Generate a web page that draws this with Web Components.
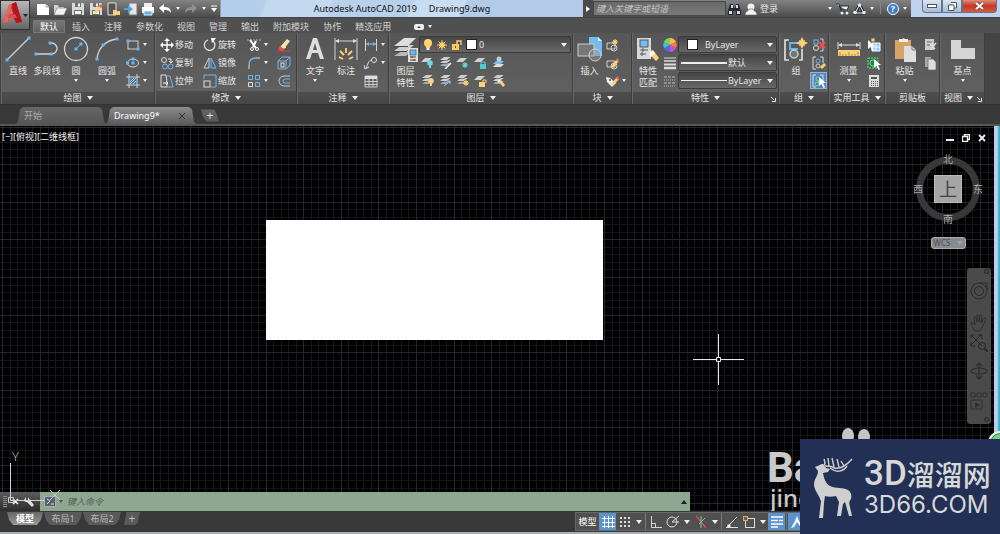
<!DOCTYPE html>
<html lang="zh-CN">
<head>
<meta charset="utf-8">
<title>Autodesk AutoCAD 2019</title>
<style>
html,body{margin:0;height:100%;background:#383838}
body{font:9px/12px "Noto Sans","Noto Sans CJK SC",sans-serif;color:#e6e6e6;overflow:hidden}
</style>
</head>
<body>
<cad-app></cad-app>
<script>
const B='#74b4e6', G='#d2d2d2', Y='#ffd07a';
const S=(c,w=1)=>`fill="none" stroke="${c}" stroke-width="${w}"`;
const dot=(x,y,c='#62b8f5')=>`<rect x="${x-1.5}" y="${y-1.5}" width="3" height="3" fill="${c}"/>`;
const sheets=(c='#cfcfcf',m='#a9a9a9')=>`<path d="M1 10l4-3h7l-4 3z" fill="${m}"/><path d="M1 7l4-3h7l-4 3z" fill="${c}"/><path d="M1 4l4-3h7l-4 3z" fill="${c}"/><path d="M1 7.5h7l4-3M1 4.5h7l4-3" ${S('#454545',.6)}/>`;
const one=`<path d="M0 6l4-4h7l-4 4z" fill="#d0d0d0"/>`;
const bulb=(x,y,c)=>`<circle cx="${x}" cy="${y}" r="2.8" fill="${c}"/><path d="M${x-1} ${y+2}h2v3h-2z" fill="${c}"/>`;
const star=(x,y,r,c=Y)=>`<path d="M${x} ${y-r}v${2*r}M${x-r} ${y}h${2*r}M${x-r*.7} ${y-r*.7}l${r*1.4} ${r*1.4}M${x+r*.7} ${y-r*.7}l${-r*1.4} ${r*1.4}" ${S(c,1)}/><circle cx="${x}" cy="${y}" r="${r*.55}" fill="${c}"/>`;
const pencil=`<path d="M6 12l1-3 5-6 2 2-5 6z" fill="${Y}"/><path d="M11 4l1.500-2 2.500 2-2 2z" fill="#ef5a4c"/>`;
const cursor=(x,y,c='#fff')=>`<path d="M${x} ${y}l7 6-3 .300 2 4-1.500.700-2-4-2.500 2z" fill="${c}"/>`;
const floppy=`<path d="M2 1h11l1 1v11H2z" fill="#d9d9d9"/><path d="M5 1h6v4H5zM4 8h8v5H4z" fill="#707070"/><path d="M5 9h6v3H5zM8 1.500h2v3H8z" fill="#f4f4f4"/>`;
const ICONS={
 newf:[14,14,`<path d="M1 2h9l3 3v8H1z" fill="#fff"/><path d="M10 2v3h3" ${S('#777',.7)}/>`],
 open:[14,14,`<path d="M1 12V3h4l1 2h5v2" fill="#d0d0d0"/><path d="M1 13l3-7h10l-3 7z" fill="#f2f2f2" stroke="#777" stroke-width=".6"/>`],
 save:[15,14,floppy], saveas:[15,14,floppy+pencil],
 openweb:[14,14,`<path d="M2 1h8v12H2z" fill="#555" stroke="#e0e0e0"/><path d="M7 8h3l1 1h3v4H7z" fill="${Y}"/>`],
 saveweb:[14,14,`<path d="M5 1h8v12H5z" fill="#e5e5e5" stroke="#777"/><path d="M0 6h4V3l5 4-5 4V8H0z" fill="#4ba3e0"/>`],
 print:[14,14,`<path d="M3 1h8v4H3z" fill="#eee"/><path d="M1 5h12v6H1z" fill="#fff"/><path d="M3 9h8v4H3z" fill="#56b4f5" stroke="#eee"/>`],
 undo:[14,12,`<path d="M1 5l5-4v3c4 0 7 1 7 6-2-3-4-3-7-3v3z" fill="#fff"/>`],
 redo:[14,12,`<path d="M13 5L8 1v3c-4 0-7 1-7 6 2-3 4-3 7-3v3z" fill="#8f8f8f"/>`],
 more:[8,8,`<path d="M1 1h6" ${S('#fff',1)}/><path d="M1 3h6L4 7z" fill="#fff"/>`],
 down:[6,4,`<path d="M0 0h6L3 4z" fill="#f0f0f0"/>`],
 downs:[4,3,`<path d="M0 0h4L2 3z" fill="#f0f0f0"/>`],
 right:[4,6,`<path d="M0 0v6l4-3z" fill="#fff"/>`],
 up:[6,4,`<path d="M0 4h6L3 0z" fill="#202020"/>`],
 launch:[5,5,`<path d="M0 0l3 3M4.500 1v3.500H1" ${S('#e6e6e6')}/>`],
 toggle:[10,6,`<rect width="10" height="6" rx="2" fill="#eee"/><path d="M3 4h4L5 2z" fill="#444"/>`],
 bino:[13,12,`<path d="M2 1h3l1 4h1l1-4h3l2 7v4H8V8H5v4H0V8z" fill="#242a35"/><path d="M3 2h2v3H3zM8 2h2v3H8zM1 8h3v3H1zM9 8h3v3H9z" fill="#d9dde3"/>`],
 user:[12,12,`<circle cx="6" cy="4" r="3.500" fill="#f4f4f4"/><path d="M0 12c0-4 4-4 4-6h4c0 2 4 2 4 6z" fill="#f4f4f4" stroke="#444" stroke-width=".5"/>`],
 cart:[13,12,`<path d="M0 1h3l2 7h7M4 3h9l-2 4H5z" fill="#eef0f4" stroke="#252b38" stroke-width="1"/><circle cx="6" cy="10" r="1.500" fill="#eee"/><circle cx="11" cy="10" r="1.500" fill="#eee"/>`],
 a360:[13,12,`<path d="M6.500 2l4.500 8H2z" fill="none" stroke="#222c3e" stroke-width="3"/><path d="M6.500 2l4.500 8H2z" fill="none" stroke="#f5f5f5" stroke-width="1"/><circle cx="6.500" cy="2" r="1.800" fill="#eee"/><circle cx="2" cy="9.500" r="1.800" fill="#eee"/><circle cx="11" cy="9.500" r="1.800" fill="#eee"/>`],
 line:[26,26,`<path d="M2 24L24 2" ${S(G,1.3)}/>${dot(2,24)}${dot(24,2)}`],
 pline:[26,26,`<path d="M2 18h15a5.500 5.500 0 0 0 1-11h-2" ${S(G,1.3)}/>${dot(2,18)}${dot(17,18)}${dot(16,7)}`],
 circle:[26,26,`<circle cx="13" cy="13" r="11.500" ${S(G,1.3)}/><path d="M13 13l5-5" ${S('#62b8f5')}/>${dot(13,13)}${dot(18,8)}`],
 arc:[26,26,`<path d="M3 23C4 12 12 4 23 3" ${S(G,1.3)}/>${dot(3,23)}${dot(9,9)}${dot(23,3)}`],
 rect:[14,12,`<rect x="2" y="2" width="10" height="8" ${S(G)}/>${dot(2,2)}${dot(12,10)}`],
 ellipse:[14,12,`<ellipse cx="7" cy="6" rx="5.500" ry="4" ${S(G)}/>${dot(7,6)}${dot(1.5,6)}${dot(7,2)}`],
 hatch:[14,14,`<rect x="4" y="4" width="6" height="6" fill="#3f80b8"/><path d="M3 0v14M11 0v14M0 3h14M0 11h14" ${S(G)}/><path d="M4 8l4-4M4 10l6-6M7 10l3-3" ${S('#86c7f5')}/>`],
 move:[14,14,`<path d="M7 2v10M2 7h10" ${S('#fff',1.4)}/><path d="M7 0l3 3H4zM7 14l3-3H4zM0 7l3-3v6zM14 7l-3-3v6z" fill="#fff"/>`],
 rotate:[14,14,`<path d="M5 2a5.300 5.300 0 1 0 5 1" ${S('#e0e0e0',1.3)}/><path d="M8 0h5L9 5z" fill="#fff"/>`],
 copy:[14,14,`<circle cx="4" cy="4" r="2.500" ${S('#ddd')}/><path d="M8 3h3v4M9 5l2 2 2-2" ${S('#eee')}/><circle cx="5" cy="10.500" r="2.500" ${S(B)}/><circle cx="10.500" cy="10.500" r="2.500" ${S(B)}/>`],
 mirror:[14,14,`<path d="M6 2v10H1z" ${S('#cfcfcf')}/><path d="M8 2v10h5z" fill="#366b99" stroke="${B}"/>`],
 stretch:[14,14,`<path d="M1 1h5l1 7v5H1z" ${S('#ddd')}/><path d="M7 2h3l3 11H6" ${S(B)}/><path d="M3 9h5M6 7l2 2-2 2" ${S('#fff')}/>`],
 scale:[14,14,`<path d="M1 5V1h12v12H8" ${S(B)}/><rect x="1" y="7" width="6" height="6" ${S('#ddd')}/>`],
 trim:[14,14,`<path d="M0 2h14" stroke="#a8a8a8" stroke-dasharray="2 1"/><path d="M3 2l6 8M9 3L6 9" ${S('#fff',2)}/><circle cx="5" cy="11" r="1.500" ${S('#fff')}/><circle cx="10" cy="11" r="1.500" ${S('#fff')}/>`],
 fillet:[14,14,`<path d="M2 13V9" ${S('#ddd')}/><path d="M2 9c0-5 2-7 7-7" ${S(B,1.3)}/><path d="M9 2h4" ${S('#ddd')}/>`],
 array:[14,14,`<path d="M1.500 1.500h4v4h-4zM8.500 8.500h4v4h-4zM8.500 1.500h4v4h-4z" ${S(B)}/><path d="M1.500 8.500h4v4h-4z" ${S('#ddd')}/>`],
 erase:[14,14,`<path d="M1 13h12" ${S('#b65045')}/><path d="M3 9l7-8 3 2-6 8z" fill="#ffdf9a"/><path d="M3 8l5 4-4 1-3-2z" fill="#f04e45"/><path d="M5 7l4 3" ${S('#fff')}/>`],
 explode:[14,14,`<path d="M1 5h8v8H1zM1 5l4-4h8l-4 4M9 13l4-4V1" ${S(B)}/><rect x="4" y="7" width="3" height="4" ${S('#ddd')}/>`],
 offset:[14,14,`<path d="M13 2H7a5 5 0 0 0 0 10h6" ${S('#ccc')}/><path d="M13 5H8a2 2 0 0 0 0 4h5" ${S(B)}/>`],
 text:[26,26,`<path d="M4 23L11 2h4l7 21h-4l-2-6H10l-2 6zM11 14h4L13 7z" fill="#dedede"/>`],
 dim:[26,26,`<path d="M2 2v22M24 2v22M3 5h20" ${S('#d4d4d4')}/><path d="M2 5l4-2v4zM24 5l-4-2v4z" fill="#ddd"/><path d="M6 21l4 2M7 15l4 4M13 12v5M19 15l-4 4M20 21l-4 2" ${S(Y,1.8)}/>`],
 linear:[14,14,`<path d="M1.500 1v12M12.500 1v12" ${S('#d5d5d5')}/><path d="M2 6h10" ${S(B,1.3)}/><path d="M2 6l3-2v4zM12 6L9 4v4z" fill="${B}"/>`],
 leader:[14,14,`<circle cx="10" cy="4" r="2.500" ${S('#ddd')}/><path d="M8 4C4 4 4 9 2 12M0 9l1 4 4-2" ${S('#ddd')}/>`],
 table:[14,14,`<path d="M1 2h12v11H1z" ${S('#ccc')}/><path d="M1 2h12v3H1z" fill="#ddd"/><path d="M1 7.500h12M1 10.500h12M5 5v8M9 5v8" ${S('#ccc')}/>`],
 layers:[26,26,`<path d="M1 20l8-5h10l-6 5z" fill="#b9b9b9"/><path d="M1 15l8-6h12l-7 6z" fill="#cfcfcf"/><path d="M1 10L11 2h12l-8 8z" fill="#dedede"/><path d="M1 10.500h14M1 15.500h13" ${S('#454545')}/><rect x="15" y="12" width="10" height="14" fill="#ddd"/><rect x="17" y="14" width="6" height="5" fill="#63bdf8" stroke="#555" stroke-width=".7"/><path d="M17 21h6M17 24h6M19 20v2M21 23v2" ${S('#444')}/>`],
 bulb:[10,12,`<circle cx="5" cy="4" r="4" fill="#ffd46f"/><path d="M3 6h4v3H3z" fill="#ffd46f"/><path d="M3.500 9h3v2h-3z" fill="#eee"/>`],
 sun:[12,12,star(6,6,5,'#ffcf61')],
 unlock:[12,12,`<path d="M1 5h7v6H1z" fill="#ffc95e"/><path d="M6 5V2h4v4" ${S('#ffc95e',1.5)}/><path d="M4 7h1v2H4z" fill="#555"/>`],
 l1:[13,13,one+bulb(9,7,'#65dce0')], l2:[13,13,sheets()+`<path d="M6 13l6-6" ${S('#fff',1.5)}/><path d="M2 9l5 1" ${S(B)}/>`],
 l3:[13,13,one+star(9,9,3,'#61dbe2')], l4:[13,13,one+`<path d="M6 8h6v5H6z" fill="#4fcbd8"/><path d="M7 8V6h4v2" ${S('#4fcbd8')}/>`],
 l5:[13,13,`<path d="M1 11l3-3h8l-3 3z" fill="#ddd"/><path d="M1 8l3-3h8l-3 3z" fill="#79bdf5"/><circle cx="7" cy="3" r="2.500" fill="#ccc"/>`],
 l6:[13,13,sheets()+bulb(10,7,Y)], l7:[13,13,sheets()+`<path d="M5 12l6-5M8 7h3v3" ${S('#8bcdf8')}/>`],
 l8:[13,13,sheets()+star(10,9,3)], l9:[13,13,one+`<path d="M5 8h6v5H5z" fill="${Y}"/><path d="M9 8V6h3v3" ${S(Y)}/>`],
 l10:[13,13,sheets()+`<path d="M7 8l2-2 4 5-2 2z" fill="${Y}"/><path d="M6 8l2-2" ${S('#fff',2)}/>`],
 insert:[26,26,`<path d="M12 1h9l4 4v15H12z" fill="#72bcf0"/><path d="M21 1v4h4" fill="#d5edff"/><rect x="1" y="8" width="16" height="12" fill="#777" stroke="#d0d0d0"/><circle cx="18" cy="19" r="6" fill="#9997" stroke="#d0d0d0"/>`],
 b1:[14,14,`<path d="M2 5h8v6H2z" ${S(G)}/><circle cx="9" cy="10" r="3" ${S(G)}/>${star(10,4,3)}`],
 b2:[14,14,`<path d="M2 5h8v6H2z" ${S(G)}/><circle cx="9" cy="10" r="3" ${S(G)}/>${pencil}`],
 b3:[14,14,`<path d="M1 3l4 1 6 5-4 4-5-5z" fill="#eee"/><circle cx="5" cy="6" r="1" fill="#555"/>${pencil}`],
 match:[26,26,`<rect x="2" y="2" width="14" height="21" fill="#d8d8d8"/><rect x="5" y="4" width="8" height="7" fill="#72bdf2" stroke="#555"/><path d="M5 14h8M5 18h6M8 12v4M7 16v4" ${S('#555')}/><path d="M14 18l4-4 6 8-3 3z" fill="${Y}"/><path d="M14 18l3-4 3 3-4 4z" fill="#fff"/>`],
 wheel:[14,14,`<path d="M7 7V0a7 7 0 0 1 6 4z" fill="#fdb74b"/><path d="M7 7l6-3a7 7 0 0 1 0 6z" fill="#fb7a40"/><path d="M7 7l6 3a7 7 0 0 1-6 4z" fill="#c052d0"/><path d="M7 7v7a7 7 0 0 1-6-4z" fill="#5667e0"/><path d="M7 7l-6 3a7 7 0 0 1 0-6z" fill="#43bde2"/><path d="M7 7L1 4a7 7 0 0 1 6-4z" fill="#79d75a"/>`],
 weights:[14,14,`<path d="M1 2h12" ${S('#ddd')}/><path d="M1 5h12" ${S('#ddd',1.5)}/><path d="M1 8.500h12" ${S('#ddd',2)}/><path d="M1 12h12" ${S('#ddd',2.5)}/>`],
 types:[14,14,`<path d="M1 3h12M1 9h12" ${S('#bbb')} stroke-dasharray="3 1"/><path d="M1 6h12M1 12h12" ${S('#bbb')} stroke-dasharray="1 1"/>`],
 group:[26,26,`<path d="M6 4H2v20h4M16 24h3V13" ${S('#ddd',1.7)}/><path d="M15 7H7v6h8" ${S('#62b8f5',1.8)}/><circle cx="11" cy="18" r="4" fill="#777" stroke="#ccc" stroke-width="1.500"/><path d="M19 1l2 4 4 2-4 2-2 4-2-4-4-2 4-2z" fill="${Y}"/>${star(19,7,4)}`],
 g1:[14,14,`<path d="M8 1h3v12H8" ${S('#ccc')}/><rect x="2" y="2" width="4" height="4" ${S(B)}/><circle cx="4" cy="10" r="2.500" ${S('#ddd')}/><path d="M7 4l6 6M13 4l-6 6" ${S('#f34c49',2)}/>`],
 g2:[14,14,`<path d="M4 1H1v12h3M8 1h3v6" ${S('#ddd')}/><circle cx="6" cy="5" r="2" ${S(B)}/><circle cx="6" cy="10" r="2" ${S('#ccc')}/><path d="M8 11l4-4 2 2-4 4z" fill="${Y}"/>`],
 g3:[14,14,`<path d="M4 1H1v12h3M8 1h3v6" ${S('#ddd')}/><circle cx="6" cy="5" r="2" ${S('#65dd91')}/><circle cx="5" cy="10" r="2" ${S('#65dd91')}/>${cursor(7,3)}`],
 measure:[26,26,`<path d="M2 6v7M24 6v7M3 9h20" ${S('#ddd')}/><path d="M2 9l4-2v4zM24 9l-4-2v4z" fill="#ddd"/><rect x="2" y="14" width="22" height="6" fill="${Y}"/><path d="M4 16v4M7 18v2M10 18v2M13 16v4M16 18v2M19 18v2M22 16v4" ${S('#886a38',.7)}/>`],
 u1:[14,14,`<path d="M5 5h8v8H5z" fill="#8ccaf5" stroke="#fff"/><path d="M9 5v8M5 9h8" ${S('#fff')}/>${cursor(1,2)}${star(6,2,2)}`],
 u2:[14,14,`<rect x="1" y="2" width="10" height="10" fill="#267c46" stroke="#74d68b" stroke-dasharray="2 1"/><circle cx="6" cy="7" r="3" ${S('#70e08f')}/>${cursor(7,3)}`],
 calc:[14,14,`<path d="M2 1h10v12H2z" fill="#ddd"/><path d="M4 3h6v2H4z" fill="#555"/><path d="M4 7.500h7M4 9.500h7M4 11.500h7" stroke="#555" stroke-dasharray="1 1"/>`],
 paste:[26,26,`<rect x="3" y="4" width="16" height="19" fill="#d7a468"/><path d="M7 6V3h3a2 2 0 0 1 3 0h3v3z" fill="#eee"/><path d="M12 10h8l4 4v12H12z" fill="#dedede"/><path d="M20 10v4h4" ${S('#777')}/>`],
 cut:[14,14,`<path d="M2 1h9v11H2z" fill="#ccc"/><path d="M4 4h5M4 7h3" ${S('#666')}/><path d="M7 5l5 6M13 5l-5 6" ${S('#ddd',1.5)}/>`],
 copyd:[14,14,`<path d="M2 1h6v10H2z" fill="#aaa"/><path d="M5 3h5l3 3v8H5z" fill="#ddd" stroke="#666" stroke-width=".7"/>`],
 base:[26,26,`<path d="M1 4h10v8h14v11H1z" fill="#d5d5d5"/>`],
 grid:[14,14,`<path d="M3.500 1v12M7.500 1v12M11.500 1v12M1 3.500h13M1 7.500h13M1 11.500h13" ${S('#fff')}/>`],
 dots:[14,14,`<path d="M2 3h10M2 7h10M2 11h10" stroke="#ddd" stroke-width="2" stroke-dasharray="2 2"/>`],
 ortho:[14,14,`<path d="M2.500 1v11.500H13M3 8.500h3.500v4" ${S('#d5d5d5')}/>`],
 polar:[14,14,`<circle cx="6" cy="7" r="5" ${S('#ddd')}/><path d="M6 7l7-6M6 7h7" ${S('#ddd')}/>`],
 iso:[14,14,`<path d="M2 1l10 12" ${S('#dd4e52',1.3)}/><path d="M7 1v12" ${S('#69b572',1.3)}/><path d="M5 9l6-6" ${S('#aaa')}/>`],
 track:[14,14,`<path d="M2 12L12 2M1 12.500h12" ${S('#ddd')}/>${dot(4,11,'#eee')}`],
 snap:[14,14,`<rect x="3.500" y="3.500" width="9" height="9" ${S('#ddd')}/><rect x="1.500" y="1.500" width="4" height="4" fill="#606060" stroke="#e7a75b"/>`],
 lwt:[14,14,`<path d="M1 2h12M1 5.500h7M9 5.500h4M1 9h12M1 12h7" ${S('#fff',1.5)}/>`],
 ann:[14,14,`<path d="M7 1l2 5 4 6-3-1-3-4-3 5-3 1 4-7z" fill="#fff"/>`],
 wrench:[10,10,`<path d="M0 3l2-3v3l2 0V0l2 3 4 5-2 2-5-5-2 0z" fill="#ddd"/>`],
 prompt:[12,11,`<rect x="0" y="0" width="12" height="11" rx="1" fill="#a7aeb0"/><rect x="1" y="1" width="10" height="9" fill="#58636b"/><path d="M3 3l3 2-3 3M7 8h3" ${S('#ddd')}/>`],
 wheel2:[18,18,`<circle cx="9" cy="9" r="8" ${S('#252525')}/><circle cx="9" cy="9" r="4.500" ${S('#252525')}/><path d="M10 1h7v7" ${S('#252525')}/>`],
 hand:[18,18,`<path d="M5 17L1 10c-1-2 1-2 2-1l2 2L4 4c0-2 2-2 2 0l1 4V2c0-2 2-2 2 0v6l1-6c0-2 2-1 2 0l-1 7 3-5c1-1 2 0 2 1l-4 9-2 3z" ${S('#292929')}/>`],
 zoom:[18,18,`<path d="M2 2l10 10M11 1L1 11M1 4V1h3M8 1h4v4M1 8v4h4" ${S('#1f1f1f')}/><circle cx="12" cy="12" r="3.500" ${S('#1f1f1f')}/><path d="M15 15l3 3" ${S('#1f1f1f',2)}/>`],
 orbit:[18,18,`<path d="M9 1v16M6 4l3-3 3 3M6 14l3 3 3-3" ${S('#292929',1.3)}/><ellipse cx="9" cy="9" rx="8" ry="3" ${S('#292929',1.2)}/>`],
 motion:[18,18,`<path d="M1 1h4v4H1zM7 1h4v4H7zM13 1h4v4h-4zM1 8h11v9H1z" ${S('#292929')}/><path d="M5 10l5 3-5 3z" fill="#292929"/>`]
};
const svg=n=>{const[w,h,b]=ICONS[n];return `<svg width="${w}" height="${h}" viewBox="0 0 ${w} ${h}" aria-hidden="true">${b}</svg>`};
const reset=`*{box-sizing:border-box}svg{display:block;flex:none}button,input,select{font:inherit;color:inherit;margin:0;padding:0;border:0;background:none;outline:0}button{display:flex;align-items:center;justify-content:center;white-space:nowrap}`;
const define=(tag,css,html,after)=>customElements.define(tag,class extends HTMLElement{
 connectedCallback(){if(this.shadowRoot)return;const r=this.attachShadow({mode:'open'});
 r.innerHTML=`<style>${reset}${css}</style>${typeof html==='function'?html(this):html}`;if(after)after(this,r)}
});

define('tool-big',`:host{display:block}button{flex-direction:column;justify-content:flex-start;width:100%;height:56px;line-height:12px;text-align:center}.t{margin-top:3px;display:block}.d{margin-top:2px}`,
 e=>`<button>${svg(e.getAttribute('icon'))}<span class="t"><slot></slot></span>${e.hasAttribute('menu')?`<span class="d">${svg('downs')}</span>`:''}</button>`);

define('tool-small',`:host{display:block}button{height:17px;justify-content:flex-start}.i{width:17px;height:17px;display:grid;place-items:center}:host([active]) .i{background:#5486bd;box-shadow:0 0 0 1px #8fb3dc inset}.d{width:8px;display:grid;place-items:center}`,
 e=>`<button aria-label="${e.textContent||e.getAttribute('icon')}"><span class="i">${svg(e.getAttribute('icon'))}</span><slot></slot>${e.hasAttribute('menu')?`<span class="d">${svg('downs')}</span>`:''}</button>`);

define('tool-grid',`:host{display:grid;grid-auto-flow:column;grid-template-rows:repeat(3,17px);gap:1px 0}`,`<slot></slot>`);

define('ribbon-panel',`:host{display:flex;flex-direction:column;border-right:1px solid #3e3e3e;border-left:1px solid #686868;flex:none}
 .body{flex:1;display:flex;padding:3px 2px 0;background:linear-gradient(#565656,#606060)}
 footer{height:13px;display:flex;align-items:center;justify-content:center;gap:5px;background:linear-gradient(#4d4d4d,#464646);position:relative}
 .l{position:absolute;right:2px;top:5px}:host([launcher][w="45"]) footer{padding-right:8px}`,
 e=>`<div class="body"><slot></slot></div><footer><span>${e.getAttribute('label')}</span>${e.hasAttribute('plain')?'':svg('down')}${e.hasAttribute('launcher')?`<span class="l">${svg('launch')}</span>`:''}</footer>`,
 e=>e.style.width=e.getAttribute('w')+'px');

define('prop-select',`:host{display:flex;position:relative;height:17px;border:1px solid #3b3b3b;border-radius:2px;background:linear-gradient(#454545,#686868);align-items:center}
 select{appearance:none;width:100%;height:100%;padding-left:var(--inset,26px)}.a{position:absolute;right:3px;pointer-events:none}.p{position:absolute;left:2px;display:flex;align-items:center;gap:2px;pointer-events:none}`,
 e=>`<select aria-label="${e.getAttribute('name')}"><option>${e.getAttribute('value')}</option></select><span class="p"><slot></slot></span><span class="a">${svg('down')}</span>`);

define('title-bar',`:host{display:flex;height:17px;background:linear-gradient(#828282,#4c4c4c);padding-left:30px}
 .q{display:flex;align-items:center;width:191px;padding:0 2px 0 4px;border-right:1px solid #9a9a9a}.q .f{display:grid;grid-template-columns:repeat(7,1fr);width:123px;place-items:center}.q .r{flex:1;display:flex;justify-content:space-between;align-items:center;padding-left:1px}
 .t{flex:1;background:linear-gradient(115deg,#b4cdea 12%,#c4d8ef 13% 30%,#b9d0ea 31% 52%,#c9ddf2 53% 66%,#b3cbe8 67%);color:#111;display:flex;align-items:center;justify-content:center;gap:12px;white-space:nowrap}
 .e{width:10px;justify-content:center;background:#4a4a4a}input{width:133px;height:15px;margin-top:1px;background:linear-gradient(#696969,#7a7a7a);padding:0 2px;border:1px solid #484848;font-style:italic}input::placeholder{color:#c4c4c4;opacity:1}
 .u{width:185px;display:flex;align-items:center;padding:0 4px 0 2px;gap:4px}.u .s{flex:1}.u .v{width:1px;height:11px;background:#8a8a8a;margin:0 2px}.u .n{padding-left:3px}.h{width:12px;height:12px;border-radius:50%;background:#3e7cc8;border:1px solid #fff;color:#fff;font-weight:bold;line-height:10px}
 .w{width:89px;background:#bfd4ec;display:flex;padding-left:11px}.w button{height:13px;border:1px solid #64748a;border-top:0;background:linear-gradient(#dbe5f0,#a9bdd4);width:20px}.w .m{border-radius:0 0 0 4px}.w .c{width:35px;background:linear-gradient(#e08c7c,#c43625 50%,#d65a48);border-radius:0 0 4px 0}`,
 `<div class="q"><div class="f">${['newf','open','save','saveas','openweb','saveweb','print'].map(i=>`<button aria-label="${i}">${svg(i)}</button>`).join('')}</div><div class="r">${['undo','downs','redo','downs','more'].map(i=>`<button aria-label="${i}">${svg(i)}</button>`).join('')}</div></div>
 <div class="t"><span>Autodesk AutoCAD 2019</span><span>Drawing9.dwg</span></div>
 <button class="e" aria-label="expand">${svg('right')}</button><input aria-label="search" placeholder="键入关键字或短语">
 <div class="u"><button aria-label="find">${svg('bino')}</button><button>${svg('user')}<span class="n">登录</span></button><span class="s"></span>${svg('downs')}<button aria-label="cart">${svg('cart')}</button><button aria-label="apps">${svg('a360')}</button>${svg('downs')}<span class="v"></span><button class="h">?</button>${svg('downs')}</div>
 <div class="w"><button class="m" aria-label="minimize"><svg width="10" height="5"><rect x=".5" y=".5" width="9" height="3" fill="#fff" stroke="#4c5663"/></svg></button><button aria-label="restore"><svg width="9" height="9"><path d="M3 .5h5.500v5.500H6M.5 3h5.500v5.500H.5z" fill="#fff" stroke="#4c5663"/></svg></button><button class="c" aria-label="close"><svg width="9" height="8"><path d="M1 1l7 6M8 1L1 7" stroke="#6d3c38" stroke-width="3"/><path d="M1 1l7 6M8 1L1 7" stroke="#fff" stroke-width="2"/></svg></button></div>`);

define('ribbon-tabs',`:host{display:flex;height:16px;background:#505050;padding:2px 0 0 33px;align-items:stretch;border-top:1px solid #444}
 button{padding:0 7px;color:#d0d0d0}button.on{background:linear-gradient(#7a7a7a,#606060);color:#fff;box-shadow:0 0 0 1px #777 inset;border-radius:2px 2px 0 0}.g{display:flex;align-items:center;gap:4px;padding-left:16px}`,
 `${['默认','插入','注释','参数化','视图','管理','输出','附加模块','协作','精选应用'].map((t,i)=>`<button class="${i?'':'on'}">${t}</button>`).join('')}<div class="g">${svg('toggle')}${svg('downs')}</div>`);

const small=(i,t='',a='')=>`<tool-small icon="${i}" ${a}>${t}</tool-small>`;
define('ribbon-bar',`:host{display:flex;height:72px;background:#444;padding-left:1px;border-bottom:1px solid #333}
 ribbon-panel>*{flex:none}.mod{grid-template-columns:43px 44px 30px 17px}.row{display:grid;grid-template-columns:repeat(5,1fr);width:88px;place-items:center;height:17px}.lay{width:152px;display:grid;grid-template-rows:repeat(3,17px);gap:1px}.row tool-small{height:17px}.props{width:99px;display:grid;grid-template-rows:repeat(3,17px);gap:1px}
 .sw{width:11px;height:11px;background:#fff;border:1px solid #222}.in{display:flex;gap:3px;align-items:center;padding-left:1px}.in.c{padding-left:6px}.ln{width:46px;height:2px;background:#eee}.thin{height:1px}`,
 `<ribbon-panel label="绘图" w="154"><tool-big icon="line" style="width:28px">直线</tool-big><tool-big icon="pline" style="width:30px">多段线</tool-big><tool-big icon="circle" menu style="width:28px">圆</tool-big><tool-big icon="arc" menu style="width:34px">圆弧</tool-big><tool-grid>${small('rect','','menu')+small('ellipse','','menu')+small('hatch','','menu')}</tool-grid></ribbon-panel>
 <ribbon-panel label="修改" w="142"><tool-grid class="mod">${small('move','移动')+small('copy','复制')+small('stretch','拉伸')+small('rotate','旋转')+small('mirror','镜像')+small('scale','缩放')+small('trim','','menu')+small('fillet','','menu')+small('array','','menu')+small('erase')+small('explode')+small('offset')}</tool-grid></ribbon-panel>
 <ribbon-panel label="注释" w="92"><tool-big icon="text" menu style="width:30px">文字</tool-big><tool-big icon="dim" style="width:32px">标注</tool-big><tool-grid>${small('linear','','menu')+small('leader','','menu')+small('table')}</tool-grid></ribbon-panel>
 <ribbon-panel label="图层" w="184"><tool-big icon="layers" style="width:27px">图层<br>特性</tool-big><div class="lay"><prop-select name="图层" value="0" style="--inset:59px"><span class="in">${svg('bulb')+svg('sun')+svg('unlock')}<span class="sw"></span></span></prop-select><div class="row">${['l1','l2','l3','l4','l5'].map(i=>small(i)).join('')}</div><div class="row">${['l6','l7','l8','l9','l10'].map(i=>small(i)).join('')}</div></div></ribbon-panel>
 <ribbon-panel label="块" w="59"><tool-big icon="insert" style="width:27px">插入</tool-big><tool-grid>${small('b1')+small('b2')+small('b3','','menu')}</tool-grid></ribbon-panel>
 <ribbon-panel label="特性" w="147" launcher><tool-big icon="match" style="width:26px">特性<br>匹配</tool-big><tool-grid>${small('wheel')+small('weights')+small('types')}</tool-grid><div class="props"><prop-select name="颜色" value="ByLayer" style="--inset:26px"><span class="in c"><span class="sw"></span></span></prop-select><prop-select name="线宽" value="默认" style="--inset:49px"><span class="ln"></span></prop-select><prop-select name="线型" value="ByLayer" style="--inset:49px"><span class="ln thin"></span></prop-select></div></ribbon-panel>
 <ribbon-panel label="组" w="50"><tool-big icon="group" style="width:28px">组</tool-big><tool-grid>${small('g1')+small('g2')+small('g3','','active')}</tool-grid></ribbon-panel>
 <ribbon-panel label="实用工具" w="56"><tool-big icon="measure" menu style="width:33px">测量</tool-big><tool-grid>${small('u1')+small('u2')+small('calc')}</tool-grid></ribbon-panel>
 <ribbon-panel label="剪贴板" w="55" plain><tool-big icon="paste" menu style="width:33px">粘贴</tool-big><tool-grid>${small('cut')+small('copyd')}</tool-grid></ribbon-panel>
 <ribbon-panel label="视图" w="45" launcher><tool-big icon="base" menu style="width:39px">基点</tool-big></ribbon-panel>`);

define('doc-tab',`:host{display:block;width:90px;height:17px}:host([add]){width:18px;margin-left:5px}button{width:100%;height:100%;justify-content:flex-start;padding:0 11px 0 8px;background:linear-gradient(#666,#555);color:#aaa;clip-path:polygon(0 100%,2px 85%,4px 15%,7px 0,calc(100% - 7px) 0,calc(100% - 4px) 15%,calc(100% - 2px) 85%,100% 100%)}:host([on]) button{background:linear-gradient(#8c8c8c,#5c5c5c);color:#fff}:host([add]) button{padding:0;justify-content:center;color:#ddd;font-size:12px;clip-path:polygon(0 15%,75% 15%,90% 50%,100% 85%,30% 85%,12% 60%)}i{margin-left:auto;font-style:normal}`,
 e=>`<button><slot></slot>${e.hasAttribute('on')?'<i><svg width="6" height="6"><path d="M0 0l6 6M6 0L0 6" stroke="#333"/></svg></i>':''}</button>`);

define('doc-tabs',`:host{display:flex;height:21px;background:#383838;padding:2px 0 0 16px;border-bottom:2px solid #565656}`,`<doc-tab>开始</doc-tab><doc-tab on>Drawing9*</doc-tab><doc-tab add>+</doc-tab>`);

define('drawing-grid',`:host{display:block;position:absolute;inset:0}svg{width:100%;height:100%}`,()=>{
 // 25 minor divisions per tile, every fifth one is a major line
 let a='',b='';for(let i=0;i<25;i++){const p=Math.round(i*188/25)+.5,s=`M${p} 0v188M0 ${p}h188`;i%5?a+=s:b+=s}
 return `<svg aria-hidden="true"><defs><pattern id="g" x="40" y="0" width="188" height="188" patternUnits="userSpaceOnUse" patternTransform="translate(0 -37)"><path d="${a}" stroke="#15161b"/><path d="${b}" stroke="#212633"/></pattern></defs><rect width="100%" height="100%" fill="#000"/><rect width="100%" height="100%" fill="url(#g)"/></svg>`});

define('view-cube',`:host{display:grid;grid-template:14px 46px 14px/14px 46px 14px;place-items:center;color:#aaa;position:relative;width:74px;font-size:10px}
 .ring{position:absolute;left:5px;top:5px;width:64px;height:64px;border:7px solid #383838;border-radius:50%}span{position:relative}.n,.s{grid-column:2}.n{grid-row:1}.s{grid-row:3}.w{grid-area:2/1}.e{grid-area:2/3}.top{grid-area:2/2;width:28px;height:28px;background:#a5a5a5;border:1px solid #bbb;color:#444;font-size:18px;position:relative}`,
 `<div class="ring"></div><span class="n">北</span><span class="w">西</span><button class="top">上</button><span class="e">东</span><span class="s">南</span>`);

define('nav-bar',`:host{display:flex;flex-direction:column;align-items:center;width:24px;height:156px;background:#4a4a4a;border-radius:3px;padding:13px 0 0;gap:6px;position:relative}
 i{position:absolute;right:2px;width:5px;height:5px;border:1px solid #222;border-radius:50%}.a{top:1px}.b{bottom:2px}svg{opacity:.8}button{height:20px}.pan{margin-top:6px}.zoom{margin-top:-6px}.orbit{margin-top:2px}.motion{margin-top:4px}`,
 `<i class="a"></i><button aria-label="wheel">${svg('wheel2')}</button><button class="pan" aria-label="pan">${svg('hand')}</button><button class="zoom" aria-label="zoom">${svg('zoom')}</button><button class="orbit" aria-label="orbit">${svg('orbit')}</button><button class="motion" aria-label="motion">${svg('motion')}</button><i class="b"></i>`);

define('command-line',`:host{display:flex;height:19px;width:69%;background:#8ea791}
 .l{width:40px;background:linear-gradient(#5c5c5c,#2c2c2c);display:flex;align-items:center;gap:5px;padding-left:3px;color:#ddd}.grip{width:4px;height:12px;background:repeating-linear-gradient(#888 0 1px,#444 1px 2px)}
 .m{display:flex;align-items:center;gap:3px;padding-left:4px}input{flex:1;padding-left:4px;font-style:italic}input::placeholder{color:#526152;opacity:1}.u{width:12px}`,
 `<div class="l"><span class="grip"></span><button aria-label="close"><svg width="7" height="7"><path d="M1 1l5 5M6 1L1 6" stroke="#fff" stroke-width="1.500"/></svg></button>${svg('wrench')}</div><div class="m">${svg('prompt')}<svg width="4" height="3"><path d="M0 0h4L2 3z" fill="#4f5b50"/></svg></div><input aria-label="command" placeholder="键入命令"><button class="u" aria-label="history">${svg('up')}</button>`);

define('drawing-area',`:host{display:block;position:relative;flex:1;min-height:0;overflow:hidden;background:#000}
 .label{position:absolute;left:2px;top:5px;color:#eee}.geo{position:absolute;inset:0;width:100%;height:100%}
 aside{position:absolute;right:9px;top:8px;display:flex;flex-direction:column;align-items:flex-end}.win{display:flex;gap:8px;padding-right:5px;height:18px}view-cube{margin-right:6px}.wcs{height:12px;width:35px;border-radius:3px;background:#888a92;color:#484a50;margin:11px 25px 19px 0;font-size:8px;border:1px solid #aaa;gap:7px;line-height:10px}
 .edge{position:absolute;right:0;top:0;bottom:0;width:6px;background:linear-gradient(90deg,#b9cdea 0 4px,#38b5cc 4px)}command-line{position:absolute;left:0;bottom:0}.ucsbox{position:absolute;left:0;bottom:0}
 .mark{position:absolute;left:767px;bottom:0;color:#c9c9c9;white-space:nowrap}.mark b{display:block;font:bold 42px/34px Roboto,sans-serif}.mark span{display:block;font:500 24px/26px "Noto Sans",sans-serif;padding-left:3px}.ucs{font-size:13px;fill:#ccc;font-family:"Open Sans",sans-serif;font-weight:300}`,
 `<drawing-grid></drawing-grid><svg class="geo" aria-hidden="true"><rect x="266" y="94" width="337" height="120" fill="#fff"/><path d="M693 233.500h23M721 233.500h23M718.500 208v23M718.500 236v23M716.500 231.500h4v4h-4z" ${S('#e8e8e8')}/><ellipse cx="848" cy="310" rx="6" ry="8" fill="#c4c4c4"/><ellipse cx="864" cy="311" rx="6" ry="8" fill="#c4c4c4"/></svg>
 <div class="label">[−][俯视][二维线框]</div><div class="mark"><b>Ba</b><span>jing</span></div>
 <aside><div class="win"><svg width="8" height="8"><path d="M0 5h8v2H0z" fill="#eee"/></svg><svg width="8" height="8"><path d="M2.500 2V.5h5v5H6M.5 2.500h5v5h-5z" ${S('#eee',1.4)}/></svg><svg width="8" height="8"><path d="M1 1l6 6M7 1L1 7" ${S('#eee',1.8)}/></svg></div><view-cube></view-cube><button class="wcs">WCS<svg width="6" height="4"><path d="M0 0h6L3 4z" fill="#8fae96"/></svg></button><nav-bar></nav-bar></aside>
 <div class="edge"></div><command-line></command-line>
 <svg class="ucsbox" width="70" height="64" aria-hidden="true"><path d="M10.500 16v38M8.500 50.500h5v5h-5zM11 53.500h33" ${S('#d0d0d0')}/><text class="ucs" x="12" y="14">Y</text><path d="M50 43l10 10M60 43l-10 10" ${S('#c0c8c0')}/></svg>`);

define('layout-tabs',`:host{display:flex;padding-left:7px;height:14px}button{height:13px;width:38px;margin-right:1px;background:#5a5a5a;color:#bbb;clip-path:polygon(0 0,100% 0,calc(100% - 2px) 60%,calc(100% - 6px) 100%,6px 100%,2px 60%)}button.on{background:linear-gradient(#666,#999);color:#fff;font-weight:bold;width:36px}button.p{width:16px;font-size:12px;margin-left:2px;clip-path:polygon(15% 0,100% 0,85% 80%,70% 100%,0 100%)}`,
 `<button class="on">模型</button><button>布局1</button><button>布局2</button><button class="p" aria-label="add">+</button>`);

define('status-bar',`:host{display:flex;height:19px;width:425px;background:#505050;align-items:center;border:1px solid #686868;padding-left:2px}
 button{width:17px;height:17px;flex:none}.on{background:#5b93cf}.d{width:11px}.s{width:1px;height:17px;background:#777;margin:0 1px;flex:none}.m{width:19px;margin-right:2px;color:#fff}`,
 ()=>{const b=(n,c='')=>`<button class="${c}" aria-label="${n}">${svg(n)}</button>`,d=b('down','d'),s='<span class="s"></span>';
 return `<button class="m">模型</button>${b('grid','on')+b('dots')+d+s+b('ortho')+b('polar')+d+b('iso')+d+s+b('track')+b('snap')+d+b('lwt','on')+s+b('ann','on')}`});

define('site-badge',`:host{position:absolute;right:0;bottom:0;width:200px;height:95px;background:#223055;display:flex;align-items:center;color:#d8d8d8}
 .t{padding-left:2px;white-space:nowrap}.a{font:500 35px/36px Roboto,"Noto Sans CJK SC",sans-serif;height:36px;display:flex;align-items:center}.a span{font:500 28px/36px "Noto Sans CJK SC",sans-serif}.b{font:24px/26px Inter,sans-serif}svg{margin-left:12px}`,
 `<svg width="50" height="62" viewBox="0 0 50 62" aria-hidden="true"><path d="M3 11c4-1 5-3 8-3l3 4 4 1-2 3-5 1c1 6 3 11 7 13 7 3 12 1 18 4 3 2 4 5 3 9-2 2-2 5-1 8l2 9h-3l-4-14-2 2-2 12h-4l2-14-3-6c-4 1-8 1-11 0l-1 7-1 15H7l2-17C6 37 2 34 2 28c0-5 4-8 4-13z" fill="#cfcfcf"/><path d="M11 10c3-1 2-4 1-7M13 10c3 0 7 0 9 2 5 1 12-2 18-9M17 10l-1-8M22 11l-2-9M27 11l-2-8M32 10l-3-5M18 12c6 5 13 4 17-2" ${S('#cfcfcf',1.4)}/></svg><div class="t"><div class="a">3D<span>溜溜网</span></div><div class="b">3D66.COM</div></div>`);

define('app-menu',`:host{position:absolute;left:0;top:0;width:30px;height:30px}button{width:30px;height:30px;background:linear-gradient(#b8b8b8,#656565);border:1px solid #303030}`,
 `<button aria-label="application menu"><svg width="28" height="28"><path d="M2 22L8 4l7-3 6 20-6 1-2-5H8l-1 4zM9 13h3l-2-6z" fill="#d72d2b"/><path d="M11 3l4-2 6 20-6 1-2-5z" fill="#b41422"/><path d="M2 22L8 4l3-1-4 18z" fill="#f06358"/><path d="M6 14l8-1 2 4H7z" fill="#e84743"/><path d="M22 13h5l-2.500 3z" fill="#222"/></svg></button>`);

define('cad-app',`:host{display:flex;flex-direction:column;height:100vh;position:relative;background:#383838;overflow:hidden}
 .foot{height:23px;display:flex;justify-content:space-between;background:#383838;border-bottom:2px solid #aab0b8;padding-top:1px}.ball{position:absolute;right:-12px;bottom:79px;width:24px;height:24px;border-radius:50%;background:#77cf83;border:2px solid #e8f5e9;box-shadow:0 0 0 1px #298b54 inset}`,
 `<title-bar></title-bar><ribbon-tabs></ribbon-tabs><ribbon-bar></ribbon-bar><doc-tabs></doc-tabs><drawing-area></drawing-area><div class="foot"><layout-tabs></layout-tabs><status-bar></status-bar></div><app-menu></app-menu><span class="ball"></span><site-badge></site-badge>`);
</script>
</body>
</html>
